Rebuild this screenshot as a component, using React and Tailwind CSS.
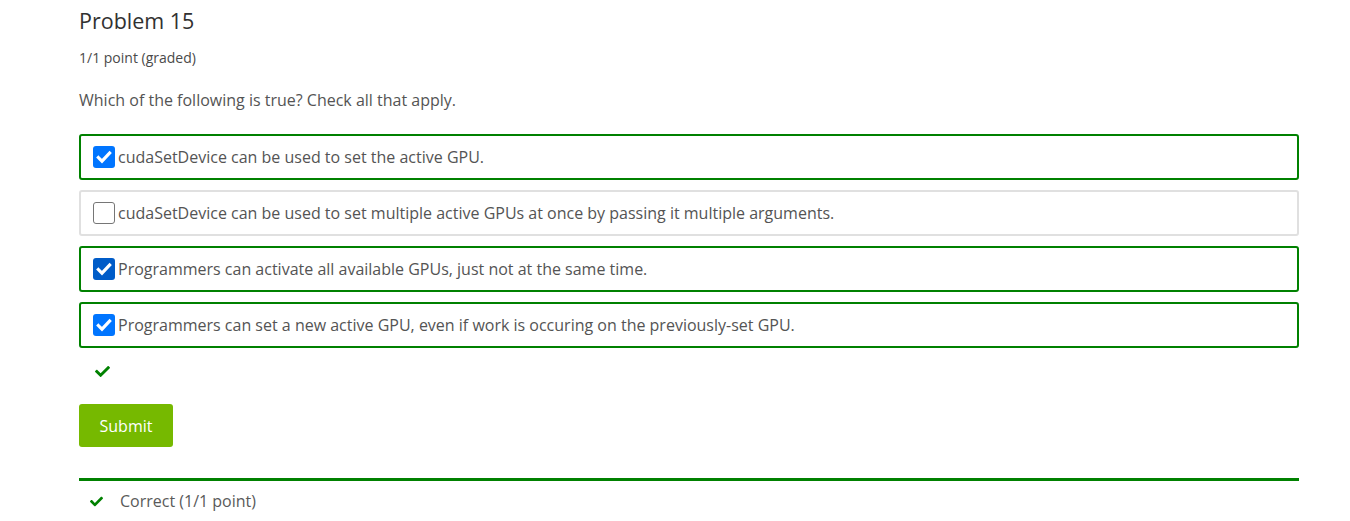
import React from "react";

const Check = ({ className }) => (
  <svg viewBox="0 0 512 512" className={className} fill="currentColor">
    <path d="M173.898 439.404l-166.4-166.4c-9.997-9.997-9.997-26.206 0-36.204l36.203-36.204c9.997-9.998 26.207-9.998 36.204 0L192 312.69 432.095 72.596c9.997-9.997 26.207-9.997 36.204 0l36.203 36.204c9.997 9.997 9.997 26.206 0 36.204l-294.4 294.401c-9.998 9.997-26.207 9.997-36.204-.001z" />
  </svg>
);

const Box = ({ checked, dark }) =>
  checked ? (
    <span
      className={`flex h-[22px] w-[22px] shrink-0 items-center justify-center rounded-[3px] ${
        dark ? "bg-[#005cc8]" : "bg-[#0075ff]"
      }`}
    >
      <svg viewBox="0 0 16 16" className="h-[18px] w-[18px]" fill="none" stroke="white" strokeWidth="2.8" strokeLinecap="square">
        <path d="M3 8.5l3.2 3.2L13 4.5" />
      </svg>
    </span>
  ) : (
    <span className="h-[22px] w-[22px] shrink-0 rounded-[3px] border border-[#767676] bg-white" />
  );

const options = [
  { text: "cudaSetDevice can be used to set the active GPU.", checked: true },
  { text: "cudaSetDevice can be used to set multiple active GPUs at once by passing it multiple arguments.", checked: false },
  { text: "Programmers can activate all available GPUs, just not at the same time.", checked: true, dark: true },
  { text: "Programmers can set a new active GPU, even if work is occuring on the previously-set GPU.", checked: true },
];

export default function App() {
  return (
    <div className="min-h-[521px] bg-white" style={{ fontFamily: '"Open Sans", sans-serif' }}>
      <div className="ml-[79px] w-[1220px] pt-[6px]">
        <h3 className="text-[21.5px] leading-[30px] text-[#313131]">Problem 15</h3>
        <div className="mt-[13px] text-[14px] leading-[18px] text-[#4a4a4a]">1/1 point (graded)</div>
        <p className="mt-[22px] text-[16px] leading-[22px] text-[#545454]">Which of the following is true? Check all that apply.</p>
        <div className="mt-[23px] flex flex-col gap-[10px]">
          {options.map((o, i) => (
            <label
              key={i}
              className={`flex h-[46px] items-center gap-[3px] rounded-[3px] border-2 pl-[12px] text-[16px] text-[#545454] ${
                o.checked ? "border-[#008100]" : "border-[#e0e0e0]"
              }`}
            >
              <Box checked={o.checked} dark={o.dark} />
              <span>{o.text}</span>
            </label>
          ))}
        </div>
        <div className="mt-[16px] flex h-[15px] items-center pl-[16px]">
          <Check className="h-[15px] w-[15px] text-[#008100]" />
        </div>
        <button className="mt-[25px] h-[43px] w-[94px] rounded-[3px] bg-[#76b900] text-[16px] text-white">Submit</button>
        <div className="mt-[31px] h-[3px] bg-[#008100]" />
        <div className="mt-[9px] flex h-[22px] items-center pl-[11px] text-[16px] text-[#5a5a5a]">
          <Check className="h-[13px] w-[13px] text-[#008100]" />
          <span className="ml-[17px]">Correct (1/1 point)</span>
        </div>
      </div>
    </div>
  );
}
